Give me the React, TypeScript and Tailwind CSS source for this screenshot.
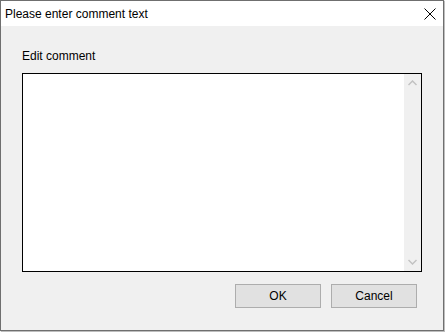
export default function App() {
  return (
    <div className="w-[445px] h-[332px] bg-[#f0f0f0] font-['Liberation_Sans',Arial,sans-serif] text-[12px] text-black">
      <div className="w-[444px] h-[331px] border border-[#6f6f6f] shadow-[1px_1px_0_#bdbdbd] flex flex-col">
        {/* title bar */}
        <div className="h-[25px] bg-white flex items-center justify-between pl-[4px] pr-[7px] shrink-0">
          <span className="leading-none">Please enter comment text</span>
          <svg width="12" height="12" viewBox="0 0 12 12" className="mt-[1px]">
            <path d="M0.5 0.5 L11.5 11.5 M11.5 0.5 L0.5 11.5" stroke="#000" strokeWidth="1" fill="none" />
          </svg>
        </div>

        <div className="flex-1 flex flex-col px-[21px] pt-[24px]">
          <label className="leading-none mb-[11px]">Edit comment</label>

          {/* text area */}
          <div className="h-[199px] bg-white border border-black flex">
            <div className="flex-1" />
            <div className="w-[17px] bg-[#f0f0f0] flex flex-col justify-between items-center py-[6px]">
              <svg width="9" height="6" viewBox="0 0 9 6">
                <path d="M0.5 5 L4.5 1 L8.5 5" stroke="#c2c2c2" strokeWidth="1.5" fill="none" />
              </svg>
              <svg width="9" height="6" viewBox="0 0 9 6">
                <path d="M0.5 1 L4.5 5 L8.5 1" stroke="#c2c2c2" strokeWidth="1.5" fill="none" />
              </svg>
            </div>
          </div>

          {/* buttons */}
          <div className="flex justify-end gap-[10px] mt-[12px] pr-[5px]">
            <button className="w-[86px] h-[24px] bg-[#e1e1e1] border border-[#adadad] leading-none">OK</button>
            <button className="w-[86px] h-[24px] bg-[#e1e1e1] border border-[#adadad] leading-none">Cancel</button>
          </div>
        </div>
      </div>
    </div>
  );
}
